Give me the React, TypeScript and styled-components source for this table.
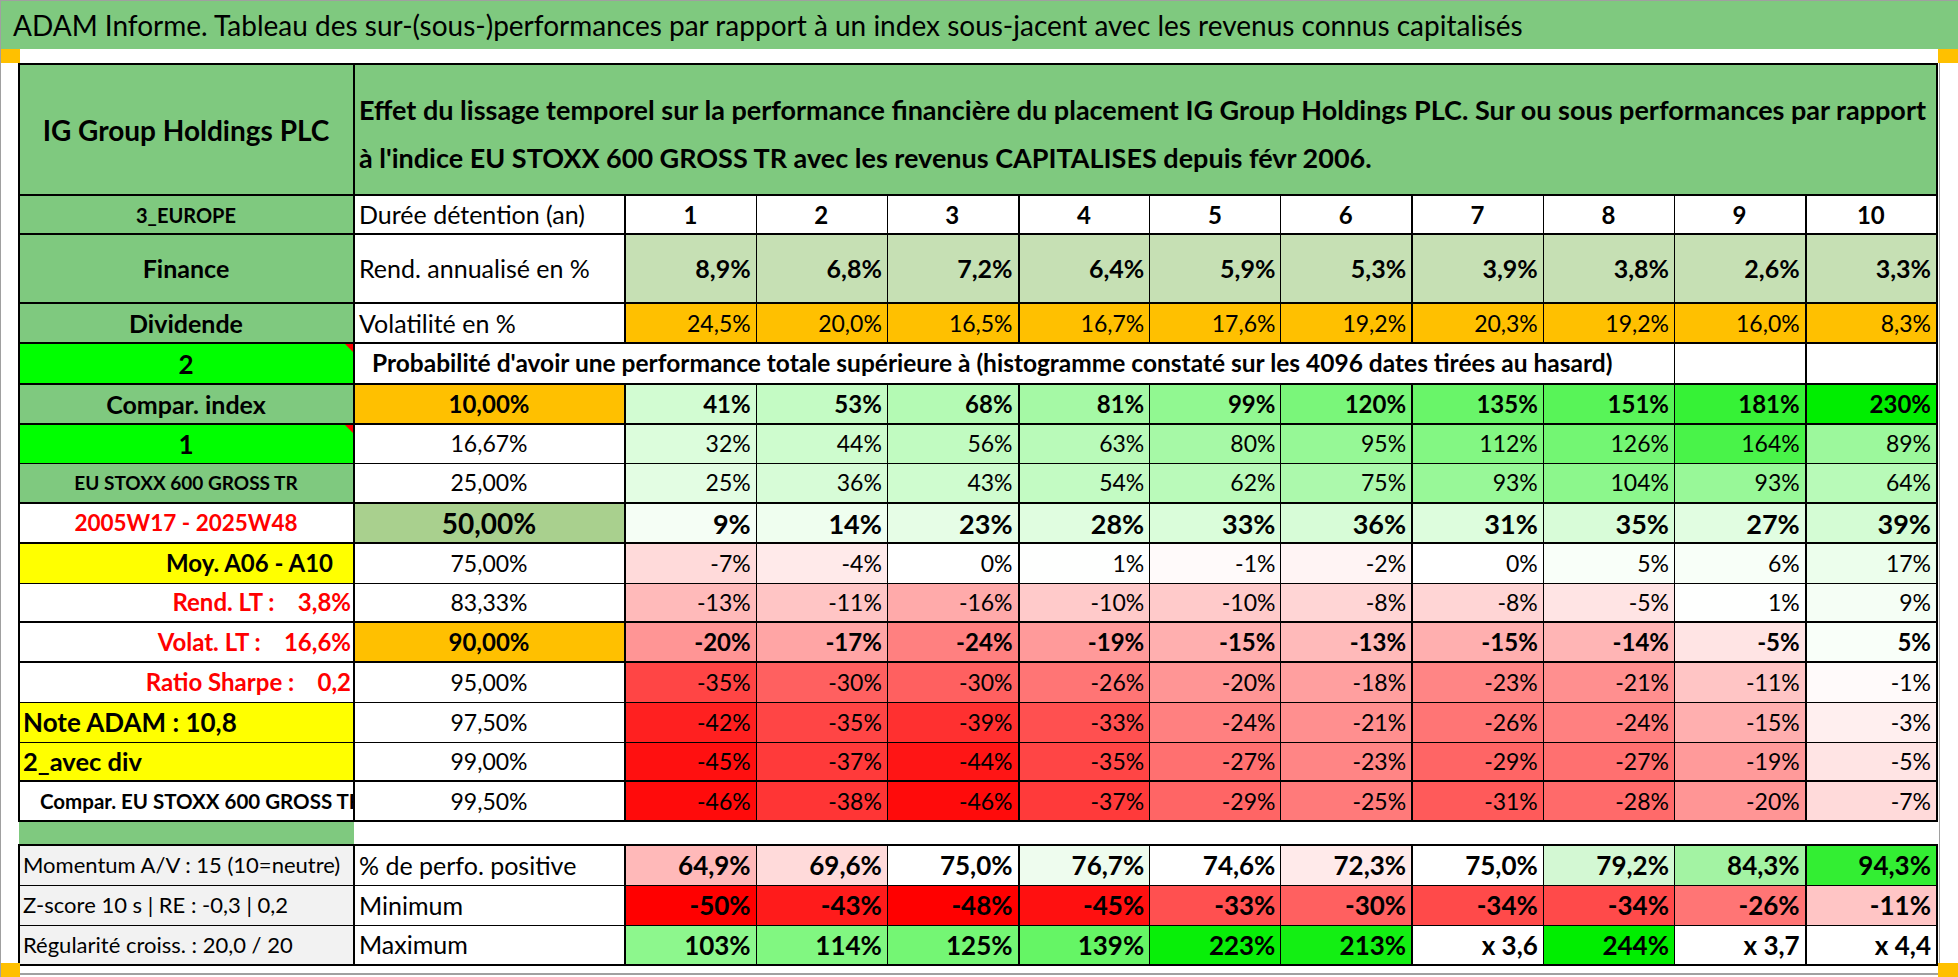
import React from "react";
import styled, { createGlobalStyle } from "styled-components";

/* couleurs de la feuille */
const GREEN = "#7fc97f";
const FLASH = "#00ff00";
const YELLOW = "#ffff00";
const ORANGE = "#ffc000";
const PALE = "#c6e0b4";
const GREY = "#f2f2f2";
const RED_TXT = "#ff0000";

const GlobalStyle = createGlobalStyle`
  html, body { margin: 0; padding: 0; background: #fff; }
  body { font-family: Lato, "Liberation Sans", sans-serif; color: #000; }
`;

const Frame = styled.div`
  position: relative;
  width: 1958px;
  height: 977px;
  box-sizing: border-box;
  border-left: 1px solid #a0a0a0;
  border-top: 1px solid #a0a0a0;
  overflow: hidden;
`;

const TitleBar = styled.div`
  height: 48px;
  line-height: 48px;
  padding-left: 12px;
  background: ${GREEN};
  font-size: 28px;
  white-space: nowrap;
`;

const SheetArea = styled.div`
  box-sizing: border-box;
  width: 1939px;
  height: 926px;
  padding: 14px 0 0 17px;
  border-right: 1px solid #a0a0a0;
  border-bottom: 2px solid #a0a0a0;
`;

const Handle = styled.span<{ $top?: boolean; $left?: boolean }>`
  position: absolute;
  width: 20px;
  height: 14px;
  background: #ffc000;
  ${(p) => (p.$top ? "top: 48px;" : "bottom: 0;")}
  ${(p) => (p.$left ? "left: -1px;" : "right: 0;")}
`;

const Sheet = styled.table`
  width: 1920px;
  border-collapse: collapse;
  table-layout: fixed;
  border: 2px solid #000;
`;

const Row = styled.tr<{ $h: number }>`
  height: ${(p) => p.$h}px;
`;

type CellProps = {
  $bg?: string;
  $color?: string;
  $align?: "left" | "center" | "right";
  $bold?: boolean;
  $size?: number;
  $pl?: number;
  $pr?: number;
  $top?: number;
  $left?: number;
  $note?: boolean;
  $open?: boolean;
};

const Cell = styled.td<CellProps>`
  position: relative;
  box-sizing: border-box;
  padding: 0 ${(p) => p.$pr ?? 5}px 0 ${(p) => p.$pl ?? 4}px;
  background: ${(p) => p.$bg ?? "#fff"};
  color: ${(p) => p.$color ?? "#000"};
  text-align: ${(p) => p.$align ?? "right"};
  font-weight: ${(p) => (p.$bold ? 700 : 400)};
  font-size: ${(p) => p.$size ?? 23}px;
  line-height: 1;
  white-space: pre;
  overflow: hidden;
  vertical-align: middle;
  border: 1px solid #000;
  border-top-width: ${(p) => p.$top ?? 1}px;
  border-left-width: ${(p) => p.$left ?? 1}px;
  ${(p) => (p.$open ? "border-left-style: hidden; border-right-style: hidden;" : "")}

  &::after {
    content: "";
    display: ${(p) => (p.$note ? "block" : "none")};
    position: absolute;
    top: 0;
    right: 0;
    border-top: 8px solid #ff0000;
    border-left: 8px solid transparent;
  }
`;

const HeadText = styled.div`
  padding-top: 8px;
  font-size: 27px;
  font-weight: 700;
  line-height: 48px;
  white-space: nowrap;
`;

/* échelles de couleur (mise en forme conditionnelle) */
const redScale = (v: number) => {
  const t = Math.min(1, Math.max(0, -v / 48));
  const c = Math.round(255 * (1 - t));
  return `rgb(255,${c},${c})`;
};
const greenScale = (v: number) => {
  const t = Math.min(1, Math.max(0, v / 230));
  const c = Math.round(255 * (1 - t));
  return `rgb(${c},${Math.round(255 - 17 * t)},${c})`;
};
const scale = (v: number) => (v < 0 ? redScale(v) : greenScale(v));

// bordure gauche épaisse toutes les 3 colonnes
const colLeft = (i: number) => (i % 3 === 0 ? 2 : 1);

const years = ["1", "2", "3", "4", "5", "6", "7", "8", "9", "10"];
const rendement = ["8,9%", "6,8%", "7,2%", "6,4%", "5,9%", "5,3%", "3,9%", "3,8%", "2,6%", "3,3%"];
const volatilite = ["24,5%", "20,0%", "16,5%", "16,7%", "17,6%", "19,2%", "20,3%", "19,2%", "16,0%", "8,3%"];

type Band = {
  label: string;
  labelBg: string;
  labelColor?: string;
  labelAlign: "left" | "center" | "right";
  labelSize?: number;
  labelBold?: boolean;
  labelPl?: number;
  labelPr?: number;
  note?: boolean;
  pct: string;
  pctBg?: string;
  pctBold?: boolean;
  pctSize?: number;
  values: number[];
  bold?: boolean;
  size?: number;
  top: number;
  h: number;
};

const bands: Band[] = [
  { label: "Compar. index", labelBg: GREEN, labelAlign: "center", labelBold: true, labelSize: 25, pct: "10,00%", pctBg: ORANGE, pctBold: true, pctSize: 24, values: [41, 53, 68, 81, 99, 120, 135, 151, 181, 230], bold: true, size: 24, top: 2, h: 40 },
  { label: "1", labelBg: FLASH, labelAlign: "center", labelBold: true, labelSize: 26, note: true, pct: "16,67%", values: [32, 44, 56, 63, 80, 95, 112, 126, 164, 89], top: 2, h: 39 },
  { label: "EU STOXX 600 GROSS TR", labelBg: GREEN, labelAlign: "center", labelBold: true, labelSize: 19, pct: "25,00%", values: [25, 36, 43, 54, 62, 75, 93, 104, 93, 64], top: 1, h: 40 },
  { label: "2005W17 - 2025W48", labelBg: "#fff", labelColor: RED_TXT, labelAlign: "center", labelBold: true, labelSize: 22.5, pct: "50,00%", pctBg: "#a9d08e", pctBold: true, pctSize: 28, values: [9, 14, 23, 28, 33, 36, 31, 35, 27, 39], bold: true, size: 27, top: 2, h: 40 },
  { label: "Moy. A06 - A10", labelBg: YELLOW, labelAlign: "right", labelBold: true, labelSize: 24, labelPr: 20, pct: "75,00%", values: [-7, -4, 0, 1, -1, -2, 0, 5, 6, 17], top: 2, h: 40 },
  { label: "Rend. LT :    3,8%", labelBg: "#fff", labelColor: RED_TXT, labelAlign: "right", labelBold: true, labelSize: 24, labelPr: 2, pct: "83,33%", values: [-13, -11, -16, -10, -10, -8, -8, -5, 1, 9], top: 1, h: 39 },
  { label: "Volat. LT :    16,6%", labelBg: "#fff", labelColor: RED_TXT, labelAlign: "right", labelBold: true, labelSize: 24, labelPr: 2, pct: "90,00%", pctBg: ORANGE, pctBold: true, pctSize: 24, values: [-20, -17, -24, -19, -15, -13, -15, -14, -5, 5], bold: true, size: 24, top: 2, h: 40 },
  { label: "Ratio Sharpe :    0,2", labelBg: "#fff", labelColor: RED_TXT, labelAlign: "right", labelBold: true, labelSize: 24, labelPr: 2, pct: "95,00%", values: [-35, -30, -30, -26, -20, -18, -23, -21, -11, -1], top: 2, h: 40 },
  { label: "Note ADAM : 10,8", labelBg: YELLOW, labelAlign: "left", labelBold: true, labelSize: 26, labelPl: 3, pct: "97,50%", values: [-42, -35, -39, -33, -24, -21, -26, -24, -15, -3], top: 1, h: 40 },
  { label: "2_avec div", labelBg: YELLOW, labelAlign: "left", labelBold: true, labelSize: 25.5, labelPl: 3, pct: "99,00%", values: [-45, -37, -44, -35, -27, -23, -29, -27, -19, -5], top: 1, h: 39 },
  { label: "Compar. EU STOXX 600 GROSS TR", labelBg: "#fff", labelAlign: "left", labelBold: true, labelSize: 20.5, labelPl: 20, pct: "99,50%", values: [-46, -38, -46, -37, -29, -25, -31, -28, -20, -7], top: 2, h: 40 },
];

const positive = ["64,9%", "69,6%", "75,0%", "76,7%", "74,6%", "72,3%", "75,0%", "79,2%", "84,3%", "94,3%"];
const positiveBg = ["#ffb9b9", "#ffdada", "#ffffff", "#eefcee", "#ffffff", "#ffeaea", "#ffffff", "#d3f8d3", "#a3f3a3", "#33ee33"];
const minimum = [-50, -43, -48, -45, -33, -30, -34, -34, -26, -11];
const maximum: (number | string)[] = [103, 114, 125, 139, 223, 213, "x 3,6", 244, "x 3,7", "x 4,4"];

const stats = [
  { label: "Momentum A/V : 15 (10=neutre)", name: "% de perfo. positive", top: 2 },
  { label: "Z-score 10 s | RE : -0,3 | 0,2", name: "Minimum", top: 1 },
  { label: "Régularité croiss. : 20,0 / 20", name: "Maximum", top: 1 },
];

const statCell = (row: number, i: number) => {
  if (row === 0) return { text: positive[i], bg: positiveBg[i] };
  if (row === 1) return { text: `${minimum[i]}%`, bg: redScale(minimum[i]) };
  const m = maximum[i];
  if (typeof m === "string") return { text: m, bg: "#fff" };
  return { text: `${m}%`, bg: greenScale(m) };
};

export default function App() {
  return (
    <>
      <GlobalStyle />
      <Frame>
        <TitleBar>
          ADAM Informe. Tableau des sur-(sous-)performances par rapport à un index sous-jacent avec les revenus connus capitalisés
        </TitleBar>
        <SheetArea>
          <Sheet>
            <colgroup>
              <col style={{ width: 335 }} />
              <col style={{ width: 271 }} />
              {years.map((y) => (
                <col key={y} />
              ))}
            </colgroup>
            <tbody>
              <Row $h={131}>
                <Cell $bg={GREEN} $align="center" $bold $size={28} $left={2}>
                  IG Group Holdings PLC
                </Cell>
                <Cell colSpan={11} $bg={GREEN} $align="left" $pl={4} $left={2}>
                  <HeadText>
                    Effet du lissage temporel sur la performance financière du placement IG Group Holdings PLC. Sur ou sous performances par rapport
                    <br />
                    à l'indice EU STOXX 600 GROSS TR avec les revenus CAPITALISES depuis févr 2006.
                  </HeadText>
                </Cell>
              </Row>

              <Row $h={39}>
                <Cell $bg={GREEN} $align="center" $bold $size={20} $top={2}>
                  3_EUROPE
                </Cell>
                <Cell $align="left" $size={25} $top={2} $left={2}>
                  Durée détention (an)
                </Cell>
                {years.map((y, i) => (
                  <Cell key={y} $align="center" $bold $size={24} $top={2} $left={colLeft(i)}>
                    {y}
                  </Cell>
                ))}
              </Row>

              <Row $h={69}>
                <Cell $bg={GREEN} $align="center" $bold $size={25} $top={2}>
                  Finance
                </Cell>
                <Cell $align="left" $size={25} $top={2} $left={2}>
                  Rend. annualisé en %
                </Cell>
                {rendement.map((r, i) => (
                  <Cell key={i} $bg={PALE} $bold $size={25} $top={2} $left={colLeft(i)}>
                    {r}
                  </Cell>
                ))}
              </Row>

              <Row $h={40}>
                <Cell $bg={GREEN} $align="center" $bold $size={25} $top={2}>
                  Dividende
                </Cell>
                <Cell $align="left" $size={25} $top={2} $left={2}>
                  Volatilité en %
                </Cell>
                {volatilite.map((r, i) => (
                  <Cell key={i} $bg={ORANGE} $size={23} $top={2} $left={colLeft(i)}>
                    {r}
                  </Cell>
                ))}
              </Row>

              <Row $h={41}>
                <Cell $bg={FLASH} $align="center" $bold $size={26} $top={2} $note>
                  2
                </Cell>
                <Cell colSpan={9} $align="left" $bold $size={24.5} $pl={17} $top={2} $left={2}>
                  Probabilité d'avoir une performance totale supérieure à (histogramme constaté sur les 4096 dates tirées au hasard)
                </Cell>
                <Cell $top={2} />
                <Cell $top={2} $left={2} />
              </Row>

              {bands.map((b) => (
                <Row key={b.label} $h={b.h}>
                  <Cell
                    $bg={b.labelBg}
                    $color={b.labelColor}
                    $align={b.labelAlign}
                    $bold={b.labelBold}
                    $size={b.labelSize}
                    $pl={b.labelPl}
                    $pr={b.labelPr}
                    $top={b.top}
                    $note={b.note}
                  >
                    {b.label}
                  </Cell>
                  <Cell $bg={b.pctBg} $align="center" $bold={b.pctBold} $size={b.pctSize ?? 23} $top={b.top} $left={2}>
                    {b.pct}
                  </Cell>
                  {b.values.map((v, i) => (
                    <Cell key={i} $bg={scale(v)} $bold={b.bold} $size={b.size ?? 23} $top={b.top} $left={colLeft(i)}>
                      {`${v}%`}
                    </Cell>
                  ))}
                </Row>
              ))}

              <Row $h={24}>
                <Cell $bg={GREEN} $top={2} $open />
                <Cell colSpan={11} $top={2} $open />
              </Row>

              {stats.map((s, row) => (
                <Row key={s.name} $h={40}>
                  <Cell $bg={GREY} $align="left" $size={22} $pl={3} $top={s.top}>
                    {s.label}
                  </Cell>
                  <Cell $align="left" $size={25} $pl={4} $top={s.top} $left={2}>
                    {s.name}
                  </Cell>
                  {years.map((y, i) => {
                    const c = statCell(row, i);
                    return (
                      <Cell key={y} $bg={c.bg} $bold $size={26} $top={s.top} $left={colLeft(i)}>
                        {c.text}
                      </Cell>
                    );
                  })}
                </Row>
              ))}
            </tbody>
          </Sheet>
        </SheetArea>
        <Handle $top $left />
        <Handle $top />
        <Handle $left />
        <Handle />
      </Frame>
    </>
  );
}
